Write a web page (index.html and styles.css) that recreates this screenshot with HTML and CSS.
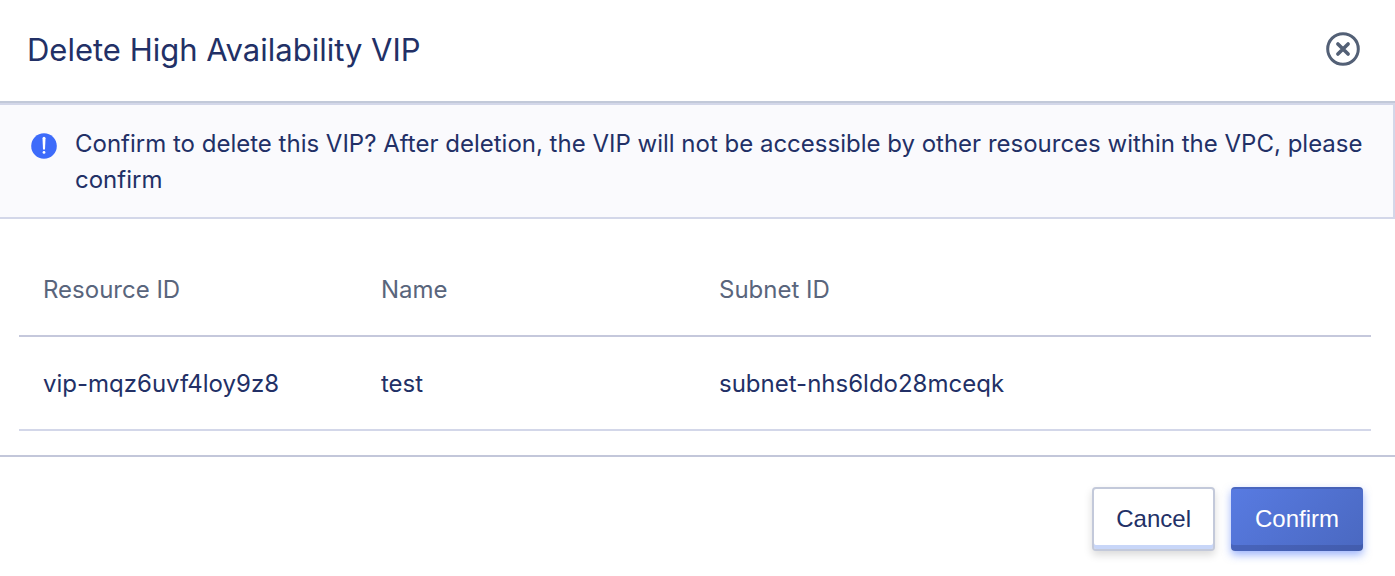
FILE: index.html
```html
<!DOCTYPE html>
<html lang="en">
<head>
<meta charset="utf-8">
<meta name="viewport" content="width=device-width, initial-scale=1">
<title>Delete High Availability VIP</title>
<link rel="stylesheet" href="styles.css">
</head>
<body>
<main class="dialog" role="dialog" aria-labelledby="dialog-title">
  <header class="dialog-header">
    <h1 class="dialog-title" id="dialog-title">Delete High Availability VIP</h1>
    <button class="close-button" type="button" aria-label="Close">
      <svg class="close-icon" viewBox="0 0 34 34" aria-hidden="true">
        <circle cx="17" cy="17" r="15.3" fill="none" stroke="currentColor" stroke-width="3"/>
        <path d="M11.9 11.9 22.1 22.1M22.1 11.9 11.9 22.1" fill="none" stroke="currentColor" stroke-width="3.6" stroke-linecap="round"/>
      </svg>
    </button>
  </header>
  <section class="notice">
    <svg class="notice-icon" viewBox="0 0 26 26" aria-hidden="true">
      <circle cx="13" cy="13" r="12.8" fill="#3d6bfa"/>
      <path d="M11.5 5.2a1.5 1.5 0 0 1 3 0l-.5 11.2h-2z" fill="#fff"/>
      <circle cx="13" cy="19.4" r="1.4" fill="#fff"/>
    </svg>
    <p class="notice-text">Confirm to delete this VIP? After deletion, the VIP will not be accessible by other resources within the VPC, please confirm</p>
  </section>
  <section class="dialog-body">
    <table class="resources">
      <thead>
        <tr><th scope="col">Resource ID</th><th scope="col">Name</th><th class="wide" scope="col">Subnet ID</th></tr>
      </thead>
      <tbody>
        <tr><td>vip-mqz6uvf4loy9z8</td><td>test</td><td>subnet-nhs6ldo28mceqk</td></tr>
      </tbody>
    </table>
  </section>
  <footer class="dialog-footer">
    <button class="button button-cancel" type="button">Cancel</button>
    <button class="button button-confirm" type="button">Confirm</button>
  </footer>
</main>
</body>
</html>
```
FILE: styles.css
```css
* {
  box-sizing: border-box;
}

body {
  margin: 0;
  background: #fff;
  color: #223066;
  font-family: Inter, "Liberation Sans", sans-serif;
  font-size: 24px;
  line-height: 36px;
}

.dialog-header {
  display: flex;
  align-items: center;
  justify-content: space-between;
  padding: 26px 35px 27px 27px;
  border-bottom: 2px solid #c2c9d9;
}

.dialog-title {
  margin: 0;
  font-size: 31px;
  font-weight: 400;
  line-height: 48px;
}

.close-button {
  display: flex;
  padding: 0 0 2px;
  border: 0;
  background: none;
  color: #536076;
  cursor: pointer;
}

.close-icon {
  width: 34px;
  height: 34px;
}

.notice {
  display: flex;
  gap: 18px;
  padding: 21px 24px 19px 31px;
  border: 2px solid #d3d7e9;
  border-left: 0;
  background: #fafafd;
}

.notice-icon {
  flex: none;
  width: 26px;
  height: 26px;
  margin-top: 7px;
}

.notice-text {
  margin: 0;
}

.dialog-body {
  padding: 24px 24px 24px 19px;
}

.resources {
  width: 100%;
  border-collapse: separate;
  border-spacing: 0;
  table-layout: fixed;
}

.resources th,
.resources td {
  padding: 29px 24px 27px;
  border-bottom: 2px solid #d3d7e9;
  text-align: left;
  font-weight: 400;
}

.resources th {
  border-color: #c5c8dc;
  color: #59657c;
}

.resources .wide {
  width: 50%;
}

.dialog-footer {
  display: flex;
  justify-content: flex-end;
  gap: 16px;
  padding: 30px 32px 25px;
  border-top: 2px solid #c3c7da;
}

.button {
  height: 64px;
  padding: 0 22px;
  border: 2px solid #c3c9da;
  border-radius: 4px;
  font-family: "Liberation Sans", Arial, sans-serif;
  font-size: 24px;
  line-height: 36px;
  cursor: pointer;
}

.button-cancel {
  background: #fff;
  color: #223066;
  box-shadow: inset 0 -4px 0 #c8d6f8, 0 4px 8px rgba(0, 0, 0, 0.15);
}

.button-confirm {
  padding: 0 24px;
  border-width: 2px 0;
  border-color: rgba(54, 75, 145, 0.4);
  background: linear-gradient(135deg, #587be2, #4a68c0) border-box;
  color: #fff;
  box-shadow: inset 0 -4px 0 rgba(54, 75, 145, 0.4), 0 4px 8px rgba(61, 107, 250, 0.5);
}
```
